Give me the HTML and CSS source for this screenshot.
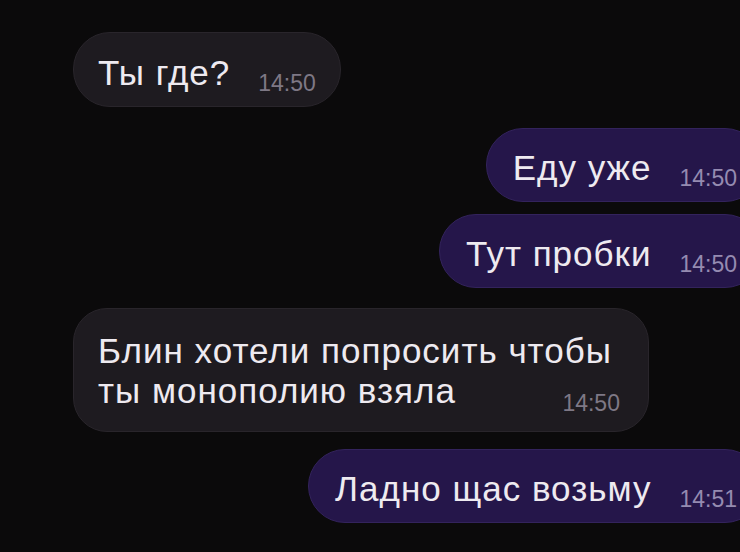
FILE: index.html
```html
<!DOCTYPE html>
<html lang="ru">
<head>
  <meta charset="UTF-8" />
  <meta name="viewport" content="width=device-width, initial-scale=1.0"/>
  <title>Чат</title>
  <link rel="stylesheet" href="styles.css">
</head>
<body>
  <div class="chat">
    <div class="msg in first">
      <span class="text">Ты где?</span>
      <span class="time">14:50</span>
    </div>

    <div class="msg out">
      <span class="text">Еду уже</span>
      <span class="time">14:50</span>
    </div>
    <div class="msg out same">
      <span class="text">Тут пробки</span>
      <span class="time">14:50</span>
    </div>

    <div class="msg in long">
      <span class="text">Блин хотели попросить чтобы<br>ты монополию взяла</span>
      <span class="time">14:50</span>
    </div>

    <div class="msg out last">
      <span class="text">Ладно щас возьму</span>
      <span class="time">14:51</span>
    </div>
  </div>
</body>
</html>
```

FILE: styles.css
```css
html, body {
  margin: 0;
  height: 100%;
  overflow: hidden;
}

body {
  background-color: #0b0a0b;
  font-family: "Liberation Sans", Arial, sans-serif;
  color: #eeeaf0;
}

.chat {
  width: 762px;
  padding: 32px 0 0 73px;
  display: flex;
  flex-direction: column;
  box-sizing: border-box;
}

.msg {
  display: flex;
  align-items: flex-end;
  gap: 28px;
  height: 74px;
  box-sizing: border-box;
  padding: 0 24px 13px 24px;
  border-radius: 37px;
  margin-top: 21px;
}

.msg.first {
  margin-top: 0;
  height: 75px;
}

.msg.same {
  margin-top: 12px;
}

.msg.last {
  margin-top: 17px;
}

.msg.in {
  align-self: flex-start;
  background-color: #1e1b20;
  border: 1px solid #29252b;
}

.msg.out {
  align-self: flex-end;
  background-color: #25164a;
  border: 1px solid #33235c;
  padding-left: 26px;
}

.text {
  font-size: 35px;
  line-height: 40px;
  letter-spacing: 1px;
}

.time {
  font-size: 23px;
  line-height: 26px;
  color: #7e7885;
  margin-bottom: -3px;
}

.out .time {
  color: #958bb1;
}

/* two-line message: time sits in the corner under the first line */
.msg.long {
  display: grid;
  height: 124px;
  border-radius: 34px;
  padding: 22px 28px 20px 24px;
  margin-top: 20px;
}

.long .text,
.long .time {
  grid-area: 1 / 1;
}

.long .text {
  padding-right: 8px;
}

.long .time {
  justify-self: end;
  align-self: end;
  margin-bottom: -5px;
}
```
